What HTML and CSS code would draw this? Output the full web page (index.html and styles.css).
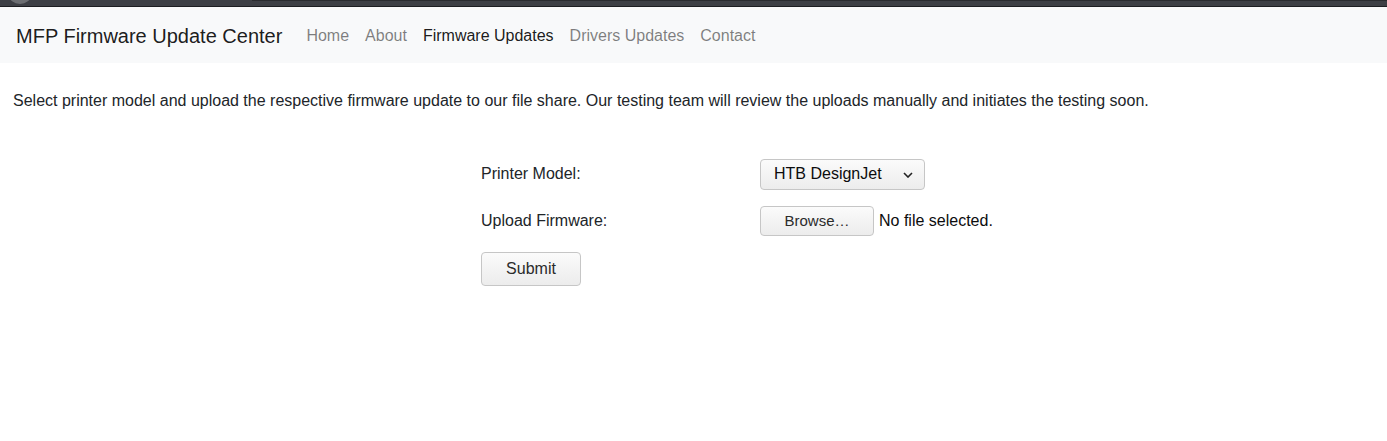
FILE: index.html
```html
<!DOCTYPE html>
<html>
<head>
<meta charset="utf-8">
<link rel="stylesheet" href="styles.css">
</head>
<body>
<div class="chrome"><span class="chrome-dot"></span><span class="chrome-tab"></span></div>
<nav class="navbar">
  <a class="brand" href="#">MFP Firmware Update Center</a>
  <ul class="nav">
    <li><a class="nav-link" href="#">Home</a></li>
    <li><a class="nav-link" href="#">About</a></li>
    <li><a class="nav-link active" href="#">Firmware Updates</a></li>
    <li><a class="nav-link" href="#">Drivers Updates</a></li>
    <li><a class="nav-link" href="#">Contact</a></li>
  </ul>
</nav>
<main class="content">
  <p class="intro">Select printer model and upload the respective firmware update to our file share. Our testing team will review the uploads manually and initiates the testing soon.</p>
  <form class="form">
    <div class="row">
      <label class="label">Printer Model:</label>
      <div class="select">
        <span>HTB DesignJet</span>
        <svg class="chev" width="10" height="6" viewBox="0 0 10 6"><path d="M1 1 L5 5 L9 1" fill="none" stroke="#222" stroke-width="1.6"/></svg>
      </div>
    </div>
    <div class="row row2">
      <label class="label">Upload Firmware:</label>
      <div class="file">
        <span class="btn browse">Browse…</span>
        <span class="nofile">No file selected.</span>
      </div>
    </div>
    <div class="row row3">
      <span class="btn submit">Submit</span>
    </div>
  </form>
</main>
</body>
</html>
```
FILE: styles.css
```css
* { box-sizing: border-box; }
html, body { margin: 0; padding: 0; background: #fff; }
body {
  font-family: "Liberation Sans", Arial, sans-serif;
  font-size: 16px;
  line-height: 1.5;
  color: #212529;
}
.chrome {
  height: 7px;
  background: #3d3f45;
  border-bottom: 1px solid #1c1d21;
  position: relative;
  overflow: hidden;
}
.chrome-dot {
  position: absolute;
  left: 9px;
  top: -14px;
  width: 22px;
  height: 18px;
  border-radius: 50%;
  background: #6c6e72;
}
.chrome-tab {
  position: absolute;
  left: 252px;
  right: 0;
  top: 0;
  height: 1px;
  background: #2a2b2f;
}
.navbar {
  display: flex;
  align-items: center;
  background: #f8f9fa;
  padding: 9px 16px 7px;
  height: 56px;
}
.brand {
  font-size: 20px;
  line-height: 30px;
  color: rgba(0,0,0,.9);
  text-decoration: none;
  margin-right: 16px;
  padding: 5px 0;
}
.nav {
  display: flex;
  list-style: none;
  margin: 0;
  padding: 0;
}
.nav-link {
  display: block;
  padding: 8px;
  color: rgba(0,0,0,.5);
  text-decoration: none;
}
.nav-link.active { color: rgba(0,0,0,.9); }
.content { padding: 0 13px; }
.intro { margin: 26px 0 0; }
.form {
  margin-top: 46px;
  padding-left: 468px;
}
.row {
  display: flex;
  align-items: center;
  height: 30px;
}
.row2 { margin-top: 17px; }
.row3 { margin-top: 16px; height: 34px; }
.label { width: 279px; }
.select {
  width: 165px;
  height: 31px;
  display: flex;
  align-items: center;
  justify-content: space-between;
  padding: 0 11px 0 13px;
  border: 1px solid #c6c6c6;
  border-radius: 4px;
  background: linear-gradient(#fbfbfb, #ececec);
  color: #0c0c0d;
}
.chev { margin-top: 1px; }
.file { display: flex; align-items: center; }
.btn {
  display: flex;
  align-items: center;
  justify-content: center;
  border: 1px solid #c6c6c6;
  border-radius: 4px;
  background: linear-gradient(#fbfbfb, #ececec);
  color: #2b2b2b;
}
.browse { width: 114px; height: 30px; font-size: 15px; }
.nofile { margin-left: 5px; color: #0c0c0d; }
.submit { width: 100px; height: 34px; }
```
